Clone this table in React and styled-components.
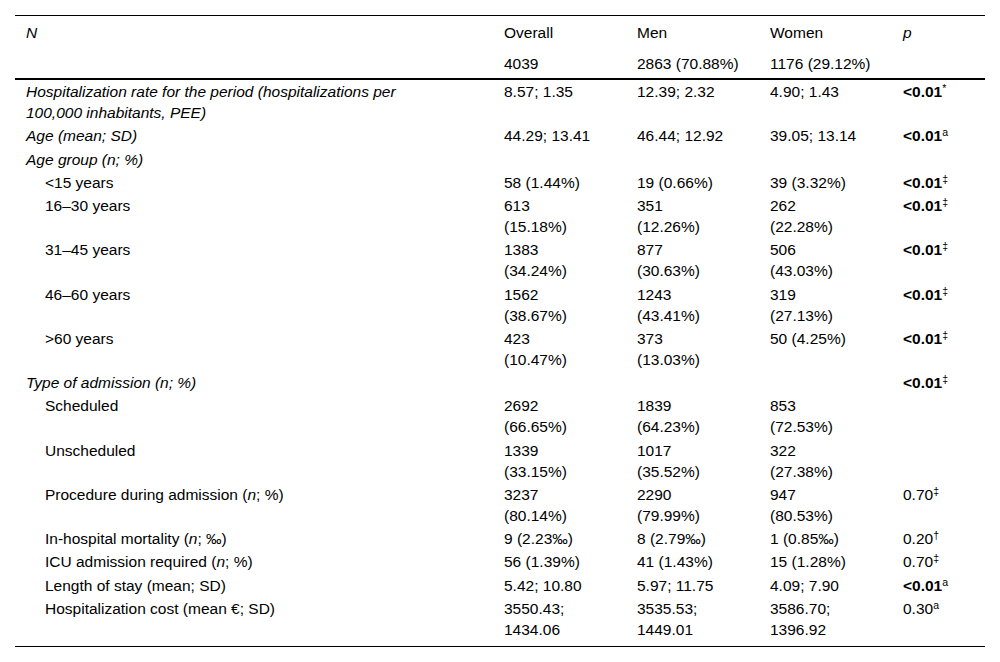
import React from 'react';
import styled, { createGlobalStyle } from 'styled-components';

const Global = createGlobalStyle`
  html, body { margin: 0; padding: 0; background: #fff; }
  body { font-family: "Liberation Sans", Arial, Helvetica, sans-serif; color: #000; }
`;

const Page = styled.div`
  padding: 15px 15px 0 15px;
`;

const Table = styled.table`
  width: 970px;
  border-collapse: collapse;
  table-layout: fixed;
  font-size: 15.5px;
  line-height: 21px;
  border-bottom: 1px solid #000;
`;

const HeadRow = styled.tr`
  border-top: ${(p) => (p.$first ? '1px solid #000' : 'none')};
  border-bottom: ${(p) => (p.$last ? '2px solid #000' : 'none')};
`;

const HeadCell = styled.th`
  text-align: left;
  font-weight: normal;
  font-style: ${(p) => (p.$italic ? 'italic' : 'normal')};
  padding: 6px 0 4px 11px;
  vertical-align: top;
`;

const BodyRow = styled.tr`
  &:last-child td {
    padding-bottom: 6px;
  }
`;

const Label = styled.td`
  padding: 1px 0 1.25px ${(p) => (p.$indent ? '30px' : '11px')};
  font-style: ${(p) => (p.$italic ? 'italic' : 'normal')};
  vertical-align: top;
`;

const Cell = styled.td`
  padding: 1px 0 1.25px 11px;
  vertical-align: top;
`;

const PValue = styled.span`
  font-weight: ${(p) => (p.$bold ? 'bold' : 'normal')};
`;

const Sup = styled.sup`
  font-size: 10.5px;
  line-height: 0;
  vertical-align: 5px;
  font-weight: normal;
`;

const Em = styled.i`
  font-style: italic;
`;

const rows = [
  {
    label: (
      <>
        Hospitalization rate for the period (hospitalizations per
        <br />
        100,000 inhabitants, PEE)
      </>
    ),
    italic: true,
    cells: [['8.57; 1.35'], ['12.39; 2.32'], ['4.90; 1.43']],
    p: { v: '<0.01', bold: true, sup: '*' },
  },
  {
    label: 'Age (mean; SD)',
    italic: true,
    cells: [['44.29; 13.41'], ['46.44; 12.92'], ['39.05; 13.14']],
    p: { v: '<0.01', bold: true, sup: 'a' },
  },
  { label: 'Age group (n; %)', italic: true, cells: [[], [], []] },
  {
    label: '<15 years',
    indent: true,
    cells: [['58 (1.44%)'], ['19 (0.66%)'], ['39 (3.32%)']],
    p: { v: '<0.01', bold: true, sup: '‡' },
  },
  {
    label: '16–30 years',
    indent: true,
    cells: [['613', '(15.18%)'], ['351', '(12.26%)'], ['262', '(22.28%)']],
    p: { v: '<0.01', bold: true, sup: '‡' },
  },
  {
    label: '31–45 years',
    indent: true,
    cells: [['1383', '(34.24%)'], ['877', '(30.63%)'], ['506', '(43.03%)']],
    p: { v: '<0.01', bold: true, sup: '‡' },
  },
  {
    label: '46–60 years',
    indent: true,
    cells: [['1562', '(38.67%)'], ['1243', '(43.41%)'], ['319', '(27.13%)']],
    p: { v: '<0.01', bold: true, sup: '‡' },
  },
  {
    label: '>60 years',
    indent: true,
    cells: [['423', '(10.47%)'], ['373', '(13.03%)'], ['50 (4.25%)']],
    p: { v: '<0.01', bold: true, sup: '‡' },
  },
  {
    label: 'Type of admission (n; %)',
    italic: true,
    cells: [[], [], []],
    p: { v: '<0.01', bold: true, sup: '‡' },
  },
  {
    label: 'Scheduled',
    indent: true,
    cells: [['2692', '(66.65%)'], ['1839', '(64.23%)'], ['853', '(72.53%)']],
  },
  {
    label: 'Unscheduled',
    indent: true,
    cells: [['1339', '(33.15%)'], ['1017', '(35.52%)'], ['322', '(27.38%)']],
  },
  {
    label: (
      <>
        Procedure during admission (<Em>n</Em>; %)
      </>
    ),
    indent: true,
    cells: [['3237', '(80.14%)'], ['2290', '(79.99%)'], ['947', '(80.53%)']],
    p: { v: '0.70', sup: '‡' },
  },
  {
    label: (
      <>
        In-hospital mortality (<Em>n</Em>; ‰)
      </>
    ),
    indent: true,
    cells: [['9 (2.23‰)'], ['8 (2.79‰)'], ['1 (0.85‰)']],
    p: { v: '0.20', sup: '†' },
  },
  {
    label: (
      <>
        ICU admission required (<Em>n</Em>; %)
      </>
    ),
    indent: true,
    cells: [['56 (1.39%)'], ['41 (1.43%)'], ['15 (1.28%)']],
    p: { v: '0.70', sup: '‡' },
  },
  {
    label: 'Length of stay (mean; SD)',
    indent: true,
    cells: [['5.42; 10.80'], ['5.97; 11.75'], ['4.09; 7.90']],
    p: { v: '<0.01', bold: true, sup: 'a' },
  },
  {
    label: 'Hospitalization cost (mean €; SD)',
    indent: true,
    cells: [['3550.43;', '1434.06'], ['3535.53;', '1449.01'], ['3586.70;', '1396.92']],
    p: { v: '0.30', sup: 'a' },
  },
];

function Lines({ lines }) {
  return lines.map((l, i) => (
    <React.Fragment key={i}>
      {i > 0 && <br />}
      {l}
    </React.Fragment>
  ));
}

export default function App() {
  return (
    <Page>
      <Global />
      <Table>
        <colgroup>
          <col style={{ width: 478 }} />
          <col style={{ width: 133 }} />
          <col style={{ width: 133 }} />
          <col style={{ width: 133 }} />
          <col style={{ width: 93 }} />
        </colgroup>
        <thead>
          <HeadRow $first>
            <HeadCell $italic>N</HeadCell>
            <HeadCell>Overall</HeadCell>
            <HeadCell>Men</HeadCell>
            <HeadCell>Women</HeadCell>
            <HeadCell $italic>p</HeadCell>
          </HeadRow>
          <HeadRow $last>
            <HeadCell />
            <HeadCell>4039</HeadCell>
            <HeadCell>2863 (70.88%)</HeadCell>
            <HeadCell>1176 (29.12%)</HeadCell>
            <HeadCell />
          </HeadRow>
        </thead>
        <tbody>
          {rows.map((r, i) => (
            <BodyRow key={i}>
              <Label $italic={r.italic} $indent={r.indent}>
                {r.label}
              </Label>
              {r.cells.map((c, j) => (
                <Cell key={j}>
                  <Lines lines={c} />
                </Cell>
              ))}
              <Cell>
                {r.p && (
                  <>
                    <PValue $bold={r.p.bold}>{r.p.v}</PValue>
                    <Sup>{r.p.sup}</Sup>
                  </>
                )}
              </Cell>
            </BodyRow>
          ))}
        </tbody>
      </Table>
    </Page>
  );
}
